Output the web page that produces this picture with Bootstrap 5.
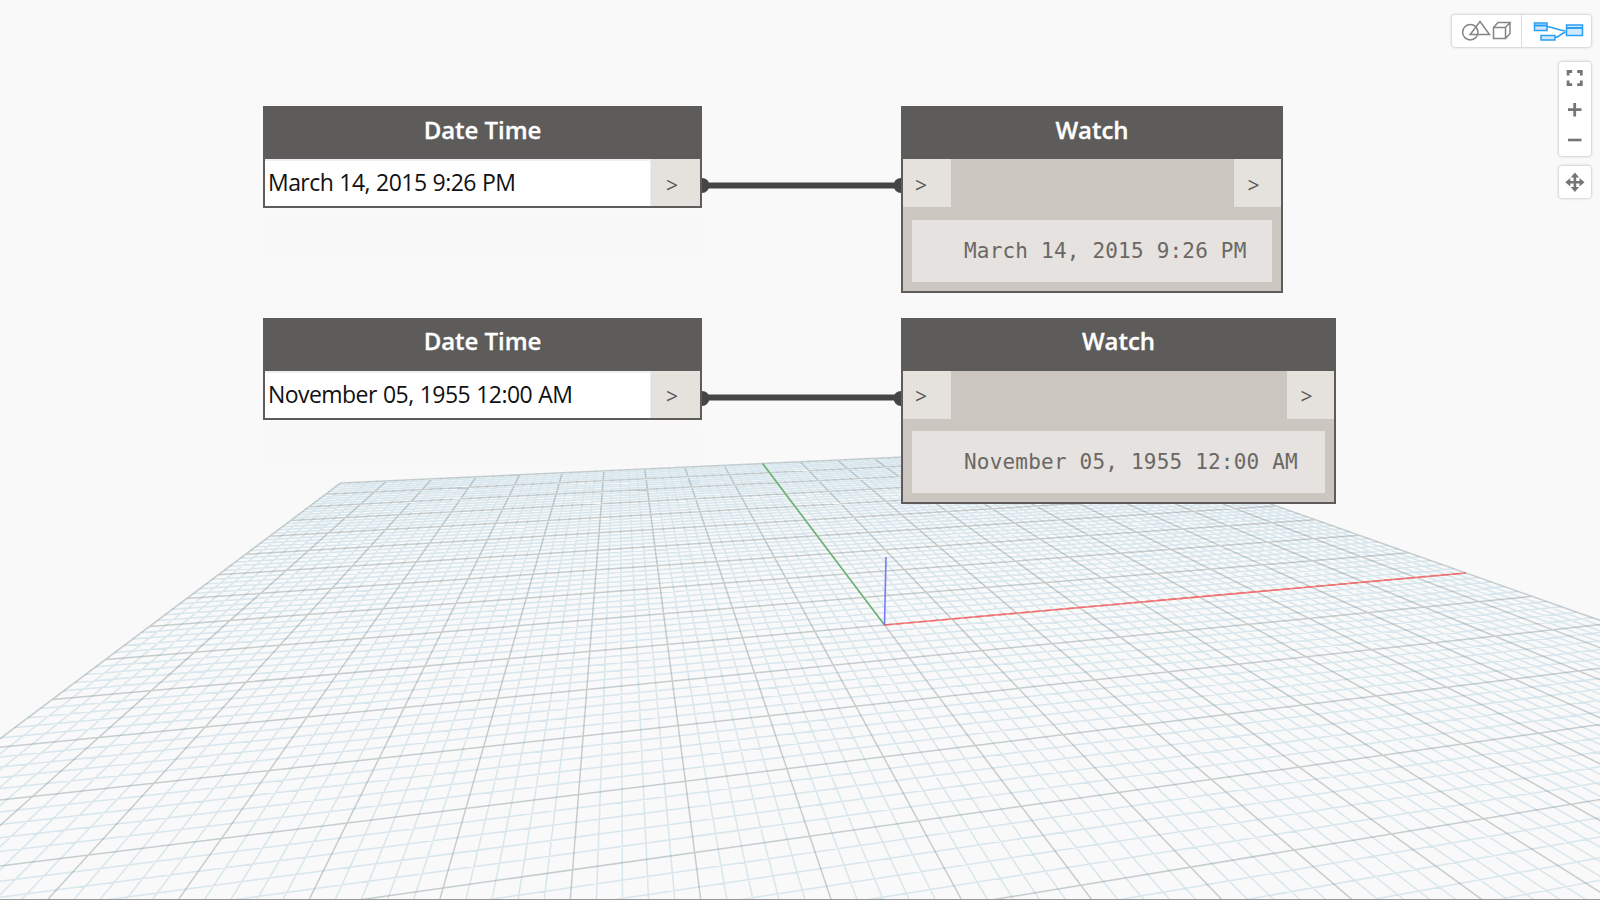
<!DOCTYPE html>
<html lang="en">
<head>
<meta charset="utf-8">
<title>Date Time graph</title>
<link href="https://cdn.jsdelivr.net/npm/bootstrap@5.3.0/dist/css/bootstrap.min.css" rel="stylesheet">
<style>
body{width:1600px;height:900px;background:#f9f9f9;font-family:"Open Sans","Noto Sans",sans-serif}
.workspace{width:1600px;height:900px;border-bottom:1px solid #999}
.scene{inset:0;width:1600px;height:900px}
.node{border:2px solid #5e5c5a;background:#cbc6bf;border-radius:0}
.node-title{height:51px;background:#5e5c5a;color:#fff;font-weight:600;font-size:24px;line-height:44px;letter-spacing:-.05px;-webkit-text-stroke:.3px #fff}
.node-low .node-title{line-height:42px}
.date-value{height:47px;background:#fff;color:#111;font-size:23px;letter-spacing:-.55px;word-spacing:.7px;line-height:42px;padding-left:3px;border-top:2px solid #f0f0f4;border-right:1px solid #eceaf2;white-space:nowrap}
.port{width:47.500px;height:48px;background:#e5e2de;color:#5a5856;font-size:21px;line-height:52px;padding-left:12px}
.node-low .port{line-height:50px}
.port-date{width:49px;height:47px;padding-left:15px}
.port-out{padding-left:14px}
.watch-value{height:62px;margin:13px 9px 9px 9px;background:#e5e2df;color:#6b6864;font:21px/63px "DejaVu Sans Mono",monospace;letter-spacing:.2px;padding-left:52px;white-space:nowrap}
.node-low .watch-value{margin-top:12px}
.node-shade{background:#f8f8f8;height:39px;width:439px;left:263px}
.panel{background:#fff;border-radius:3px;box-shadow:0 0 3px rgba(0,0,0,.32)}
.tools{top:15px;right:9px;gap:15px}
.view-btn{width:69px;height:32px;border:0;background:none}
.view-btn+.view-btn{border-left:1px solid #ddd;width:70px}
.tool-btn{width:32px;height:32px;border:0;background:none}
.zoom-panel{height:94px}
.pan-panel{margin-top:-5px}
</style>
</head>
<body class="m-0 overflow-hidden">
<main class="workspace position-relative overflow-hidden">
  <div class="node-shade position-absolute" style="top:217px"></div>
  <div class="node-shade position-absolute" style="top:427px"></div>
  <svg class="scene position-absolute" viewBox="0 0 1600 900" fill="none">
    <path id="minor" stroke="#9fc5d9" stroke-opacity=".36" stroke-width="1.5"/>
    <path id="major" stroke="#788b92" stroke-opacity=".4" stroke-width="1.5"/>
    <path d="M884.5 625L1466 573" stroke="#ff5a5a" stroke-opacity=".6" stroke-width="1.6"/>
    <path d="M884.5 625L1466 573" stroke="#ff5a5a" stroke-opacity=".6" stroke-width="1.6" stroke-dasharray="8 3.400"/>
    <path d="M884.5 625L762.6 463.5" stroke="#57ad5b" stroke-opacity=".8" stroke-width="1.6"/>
    <path d="M884.5 625L886 557" stroke="#6464ff" stroke-opacity=".85" stroke-width="1.6"/>
    <g stroke="#454545" stroke-width="6" fill="#454545">
      <path d="M702 185.4H901M702 397.6H901"/>
      <g stroke="none"><circle cx="702" cy="185.4" r="7.5"/><circle cx="901" cy="185.4" r="7.5"/><circle cx="702" cy="398.400" r="7.5"/><circle cx="901" cy="398.400" r="7.5"/></g>
    </g>
  </svg>

  <section class="node position-absolute" style="left:263px;top:106px;width:439px">
    <div class="node-title text-center">Date Time</div>
    <div class="d-flex"><div class="date-value flex-grow-1">March 14, 2015 9:26 PM</div><div class="port port-date">&gt;</div></div>
  </section>
  <section class="node node-low position-absolute" style="left:263px;top:318px;width:439px">
    <div class="node-title text-center">Date Time</div>
    <div class="d-flex"><div class="date-value flex-grow-1">November 05, 1955 12:00 AM</div><div class="port port-date">&gt;</div></div>
  </section>
  <section class="node position-absolute" style="left:901px;top:106px;width:382px">
    <div class="node-title text-center">Watch</div>
    <div class="d-flex justify-content-between"><div class="port">&gt;</div><div class="port port-out">&gt;</div></div>
    <div class="watch-value">March 14, 2015 9:26 PM</div>
  </section>
  <section class="node node-low position-absolute" style="left:901px;top:318px;width:435px">
    <div class="node-title text-center">Watch</div>
    <div class="d-flex justify-content-between"><div class="port">&gt;</div><div class="port port-out">&gt;</div></div>
    <div class="watch-value">November 05, 1955 12:00 AM</div>
  </section>

  <nav class="tools position-absolute d-flex flex-column align-items-end">
    <div class="panel d-flex">
      <button class="view-btn p-0" aria-label="3D view"><svg class="d-block" width="69" height="32" fill="none" stroke="#858585" stroke-width="1.5"><circle cx="18.300" cy="17.2" r="7.7"/><path d="M18.2 19.5L28 6.5l9.5 13zM41.5 12.5h12v11h-12zM41.5 12.5l4.5-5h12l-4.5 5M58 7.500v11l-4.500 5"/></svg></button>
      <button class="view-btn p-0" aria-label="Graph view"><svg class="d-block" width="69" height="32" fill="#cfe8fb" stroke="#2a9ff5" stroke-width="1.5"><path fill="none" d="M25 11.500C32 12.500 36 15 43.500 16M33 22.500C38 22.500 38 18 43.500 17.500"/><path d="M12.500 8h12.500v7.500h-12.500zM19 20.500h14v4.500h-14zM44.500 10h16v10.500h-16z"/><path d="M12.500 10.500h12.500M44.500 13h16" stroke-width="1.800"/></svg></button>
    </div>
    <div class="panel zoom-panel d-flex flex-column">
      <button class="tool-btn p-0" aria-label="Fit"><svg class="d-block" width="32" height="32" fill="none" stroke="#757575" stroke-width="2.8"><path d="M9.100 13.600V9.500H13.200M18.200 9.500h4.100V13.600M22.300 18.600v4.100h-4.100M13.200 22.700H9.100V18.600"/></svg></button>
      <button class="tool-btn p-0" aria-label="Zoom in"><svg class="d-block" width="32" height="32" stroke="#757575" stroke-width="2.8"><path d="M9 15.700h13.500M15.700 9v13.500"/></svg></button>
      <button class="tool-btn p-0" aria-label="Zoom out"><svg class="d-block" width="32" height="32" stroke="#757575" stroke-width="2.600"><path d="M9 14h13.500"/></svg></button>
    </div>
    <div class="panel pan-panel">
      <button class="tool-btn p-0 d-block" aria-label="Pan"><svg class="d-block" width="32" height="32" fill="#757575" stroke="#757575" stroke-width="2.600"><path d="M9 16.200h14M15.900 9v14"/><path stroke="none" d="M15.900 6.500l4.200 5h-8.400zM15.900 25.900l4.200-5h-8.400zM6.300 16.200l5-4.200v8.400zM25.500 16.200l-5-4.200v8.400z"/></svg></button>
    </div>
  </nav>
</main>
<script src="https://cdn.jsdelivr.net/npm/bootstrap@5.3.0/dist/js/bootstrap.bundle.min.js"></script>
<script>
// Ground plane seen in perspective: u runs along the red axis, v along the green one.
const depth = (u, v) => 1 + 0.01773 * u + 0.0851 * v;
const project = (u, v) => {
  const w = depth(u, v);
  return ((884.5 + 84.14 * u + 52.71 * v) / w).toFixed(2) + ' ' + ((625 + 4.96 * u + 23.29 * v) / w).toFixed(2);
};
const nearest = 0.12;
let minor = '', major = '';
for (let i = -50; i <= 50; i++) {
  const k = i / 5;
  const v0 = Math.max(-10, (nearest - 1 - 0.01773 * k) / 0.0851);
  const u0 = Math.max(-10, (nearest - 1 - 0.0851 * k) / 0.01773);
  let d = 'M' + project(k, v0) + 'L' + project(k, 10);
  if (u0 < 10) d += 'M' + project(u0, k) + 'L' + project(10, k);
  if (i % 5) minor += d; else major += d;
}
document.getElementById('minor').setAttribute('d', minor);
document.getElementById('major').setAttribute('d', major);
</script>
</body>
</html>
